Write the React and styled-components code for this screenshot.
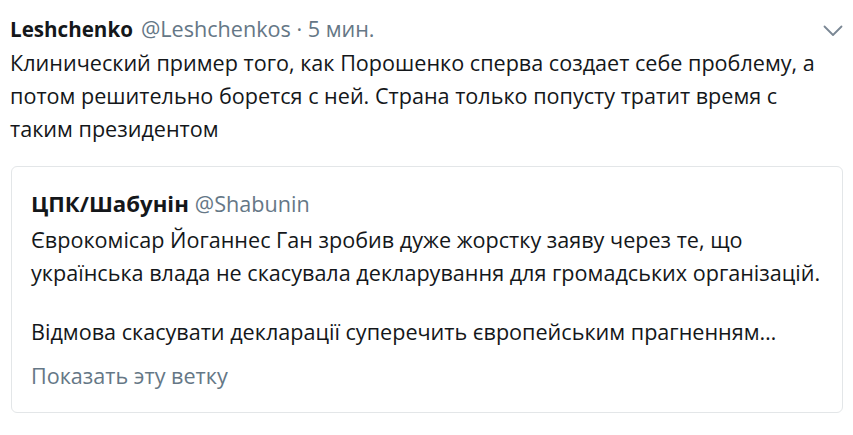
import React from "react";
import styled, { createGlobalStyle } from "styled-components";

const Global = createGlobalStyle`
  html, body { margin: 0; padding: 0; background: #ffffff; }
  body { font-family: "Open Sans", "Noto Sans", sans-serif; color: #14171a; }
`;

const Tweet = styled.article`
  width: 853px;
  box-sizing: border-box;
  padding: 12px 9px 0 10px;
  font-size: 21.6px;
  line-height: 33px;
`;

const Header = styled.div`
  display: flex;
  align-items: center;
  justify-content: space-between;
`;

const Meta = styled.div`
  display: flex;
  align-items: baseline;
  white-space: nowrap;
`;

const Name = styled.span`
  font-weight: 700;
  font-size: ${(p) => p.$size}px;
  color: #14171a;
  margin-right: ${(p) => p.$gap}px;
`;

const Grey = styled.span`
  color: #657786;
`;

const Chevron = styled.button`
  border: 0;
  background: none;
  padding: 0;
  margin: 4px 1px 0 0;
  display: flex;
  align-items: center;
  color: #7a8794;
  cursor: pointer;
`;

const Text = styled.p`
  margin: ${(p) => p.$mt || 0}px 0 0;
`;

const Quote = styled.div`
  margin: 21px 1px 20px 1px;
  border: 1px solid #e3e6e8;
  border-radius: 6px;
  padding: 20px 8px 20px 19px;
`;

const ShowThread = styled.div`
  margin-top: 11px;
  color: #657786;
`;

export default function App() {
  return (
    <>
      <Global />
      <Tweet>
        <Header>
          <Meta>
            <Name $size={20.6} $gap={8}>Leshchenko</Name>
            <Grey>@Leshchenkos · 5 мин.</Grey>
          </Meta>
          <Chevron aria-label="Ещё">
            <svg width="20" height="12" viewBox="0 0 20 12" fill="none">
              <path d="M1.5 1.5 L10 10 L18.5 1.5" stroke="currentColor" strokeWidth="1.8" strokeLinecap="round" strokeLinejoin="round" />
            </svg>
          </Chevron>
        </Header>
        <Text>
          Клинический пример того, как Порошенко сперва создает себе проблему, а потом решительно борется с ней. Страна только попусту тратит время с таким президентом
        </Text>
        <Quote>
          <Meta>
            <Name $size={22.2} $gap={6}>ЦПК/Шабунін</Name>
            <Grey>@Shabunin</Grey>
          </Meta>
          <Text $mt={3}>
            Єврокомісар Йоганнес Ган зробив дуже жорстку заяву через те, що українська влада не скасувала декларування для громадських організацій.
          </Text>
          <Text $mt={26}>Відмова скасувати декларації суперечить європейським прагненням…</Text>
          <ShowThread>Показать эту ветку</ShowThread>
        </Quote>
      </Tweet>
    </>
  );
}
